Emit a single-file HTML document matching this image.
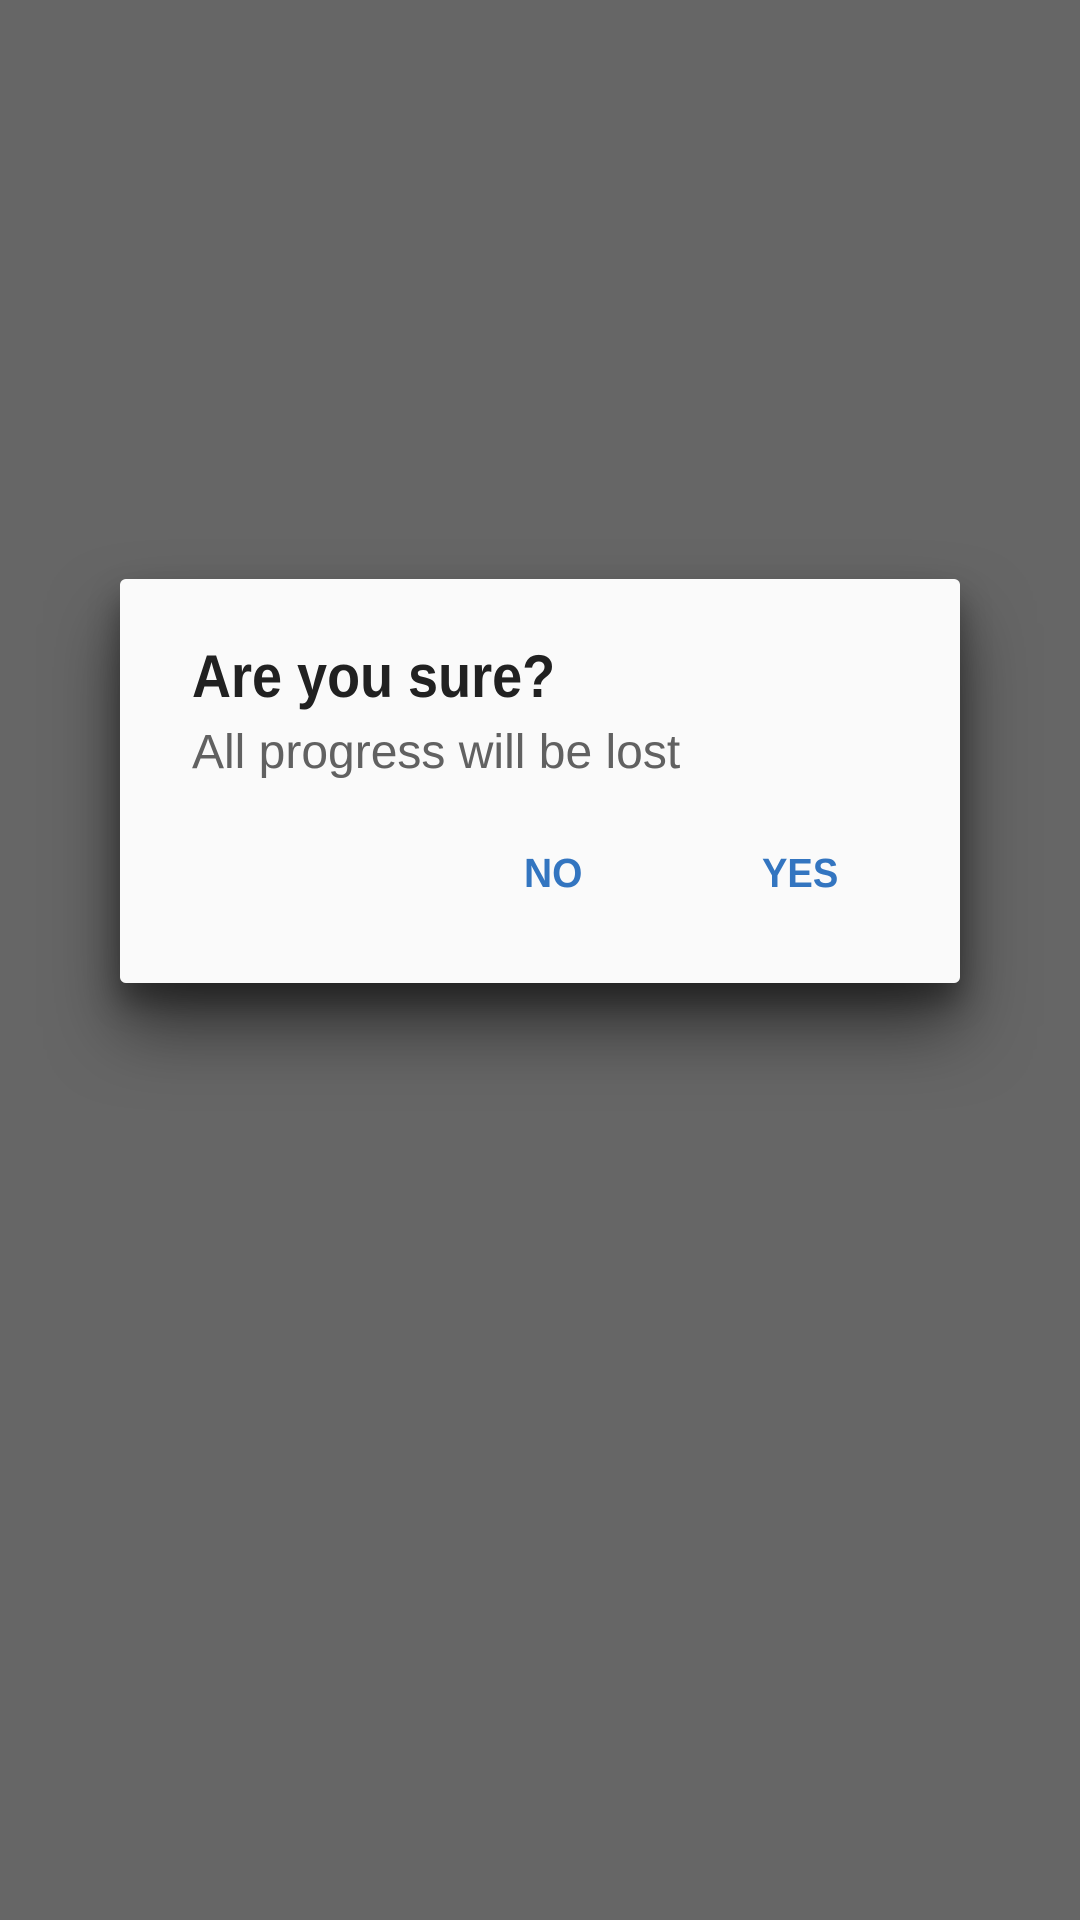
<!DOCTYPE html>
<html><head><meta charset="utf-8"><style>
html,body{margin:0;padding:0;}
body{width:1080px;height:1920px;background:#666666;position:relative;overflow:hidden;font-family:"Liberation Sans",sans-serif;}
.dlg{position:absolute;left:120px;top:579px;width:840px;height:404px;background:#fafafa;border-radius:6px;box-shadow:0 44px 70px rgba(0,0,0,0.5),0 18px 30px rgba(0,0,0,0.35);}
.t{position:absolute;white-space:nowrap;line-height:normal;}
</style></head><body>
<div class="dlg"></div>
<div class="t" style="left:192px;top:642px;font-size:60px;font-weight:bold;color:#212121;transform:scaleX(0.9);transform-origin:left top;">Are you sure?</div>
<div class="t" style="left:192px;top:725px;font-size:48px;color:#616161;">All progress will be lost</div>
<div class="t" style="left:524px;top:850px;font-size:41px;font-weight:bold;color:#3375c0;transform:scaleX(0.95);transform-origin:left top;">NO</div>
<div class="t" style="left:762px;top:850px;font-size:41px;font-weight:bold;color:#3375c0;transform:scaleX(0.93);transform-origin:left top;">YES</div>
</body></html>
